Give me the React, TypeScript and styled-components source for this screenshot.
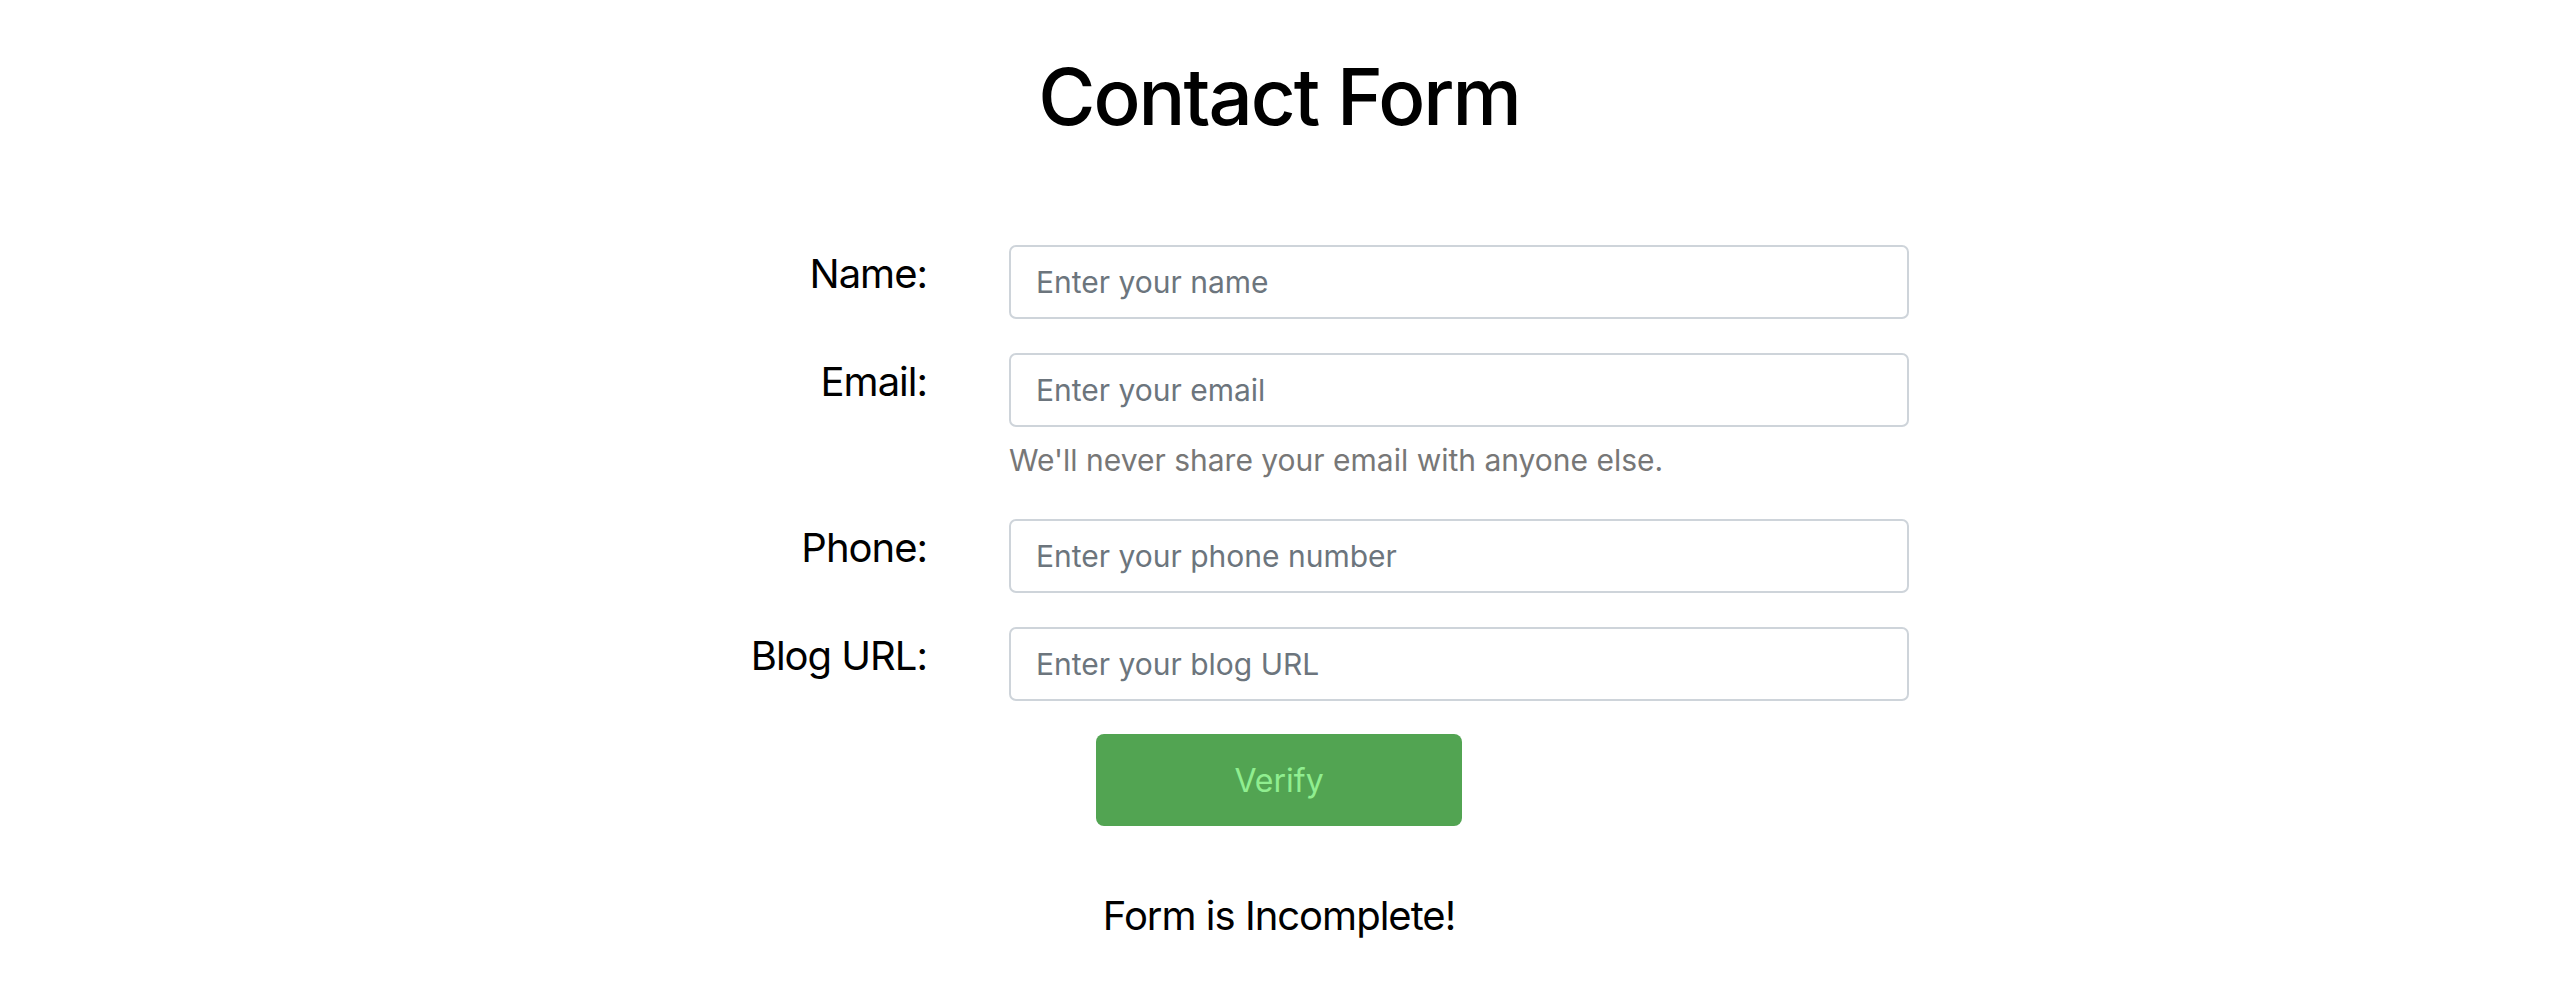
import * as React from "react";
import styled, { createGlobalStyle } from "styled-components";

const GlobalStyle = createGlobalStyle`
  html, body {
    margin: 0;
    padding: 0;
    background: #ffffff;
  }
  body {
    font-family: Inter, "Noto Sans", "Liberation Sans", sans-serif;
    color: #000000;
  }
  * {
    box-sizing: border-box;
  }
`;

interface FieldProps {
  label: string;
  placeholder: string;
  type?: string;
  help?: string;
}

const Field = ({ label, placeholder, type = "text", help }: FieldProps) => (
  <Row>
    <Label>{label}</Label>
    <FieldCell>
      <Input type={type} placeholder={placeholder} />
      {help && <HelpText>{help}</HelpText>}
    </FieldCell>
  </Row>
);

export default function App() {
  return (
    <Page>
      <GlobalStyle />
      <Title>Contact Form</Title>
      <Form onSubmit={(e) => e.preventDefault()}>
        <Field label="Name:" placeholder="Enter your name" />
        <Field
          label="Email:"
          type="email"
          placeholder="Enter your email"
          help="We'll never share your email with anyone else."
        />
        <Field label="Phone:" type="tel" placeholder="Enter your phone number" />
        <Field label="Blog URL:" type="url" placeholder="Enter your blog URL" />
        <ButtonRow>
          <VerifyButton type="submit">Verify</VerifyButton>
        </ButtonRow>
      </Form>
      <Status>Form is Incomplete!</Status>
    </Page>
  );
}

const Page = styled.div`
  display: flex;
  flex-direction: column;
  align-items: center;
  width: 100%;
`;

const Title = styled.h1`
  margin: 49px 0 100px;
  font-size: 78px;
  line-height: 96px;
  font-weight: 500;
  letter-spacing: -2px;
  color: #000;
  text-align: center;
`;

const Form = styled.form`
  display: flex;
  flex-direction: column;
  gap: 34px;
  width: 100%;
`;

const Row = styled.div`
  display: grid;
  grid-template-columns: 278px 900px;
  column-gap: 82px;
  justify-content: center;
  align-items: start;
`;

const Label = styled.label`
  margin-top: -1px;
  text-align: right;
  font-size: 40px;
  line-height: 60px;
  font-weight: 400;
  letter-spacing: -1px;
  color: #000;
`;

const FieldCell = styled.div`
  display: flex;
  flex-direction: column;
`;

const Input = styled.input`
  width: 900px;
  height: 74px;
  padding: 0 25px;
  border: 2px solid #ced4da;
  border-radius: 7px;
  background: #fff;
  font-family: inherit;
  font-size: 30px;
  color: #495057;
  outline: none;

  &::placeholder {
    color: #6c757d;
    opacity: 1;
  }
`;

const HelpText = styled.small`
  display: block;
  margin-top: 8px;
  font-size: 30px;
  line-height: 50px;
  color: #777777;
`;

const ButtonRow = styled.div`
  display: flex;
  justify-content: center;
  margin-top: -1px;
`;

const VerifyButton = styled.button`
  width: 366px;
  height: 92px;
  border: none;
  border-radius: 8px;
  background: #52a452;
  color: #90ee90;
  font-family: inherit;
  font-size: 32px;
  font-weight: 400;
  cursor: pointer;
`;

const Status = styled.p`
  margin: 60px 0 0;
  font-size: 40px;
  line-height: 60px;
  letter-spacing: -1px;
  color: #000;
  text-align: center;
`;
